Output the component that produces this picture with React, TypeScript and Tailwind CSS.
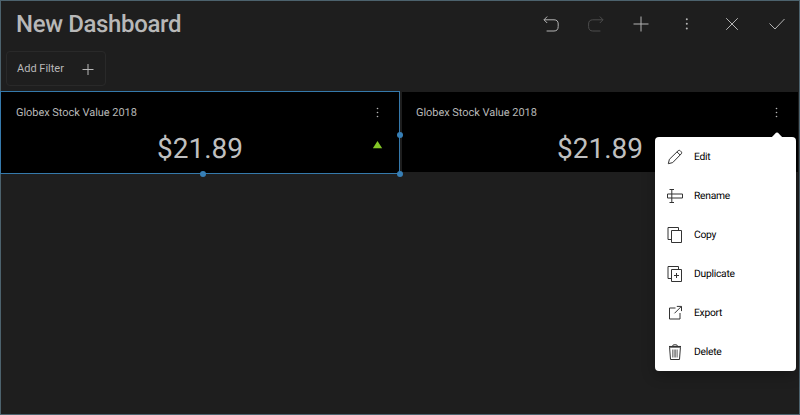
import type { ReactNode } from "react";

function Icon({ size = 20, className = "", children }: { size?: number; className?: string; children: ReactNode }) {
  return (
    <svg width={size} height={size} viewBox={`0 0 ${size} ${size}`} fill="none" stroke="currentColor" strokeWidth="1" className={`shrink-0 ${className}`}>
      {children}
    </svg>
  );
}

function Dots({ className = "" }: { className?: string }) {
  return (
    <Icon className={className}>
      <g fill="currentColor" stroke="none">
        <circle cx="10.5" cy="5.5" r="0.8" />
        <circle cx="10.5" cy="9.5" r="0.8" />
        <circle cx="10.5" cy="13.5" r="0.8" />
      </g>
    </Icon>
  );
}

function Header() {
  return (
    <header className="flex h-[45px] items-center justify-between pr-[12px] pl-[15px]">
      <h1 className="text-[24px] leading-[30px] font-medium tracking-[-0.36px] text-[#b8b8b8]">New Dashboard</h1>
      <div className="flex items-center gap-[25.2px] text-[#b4b4b4]">
        <Icon>
          <path d="M6.2 2.5L3 5.8L6.2 9M3 5.8H13Q17.2 5.8 17.2 10V12.4Q17.2 17 13 17H5.6" />
        </Icon>
        <Icon className="text-[#4c4c4c]">
          <path d="M13.8 2.5L17 5.8L13.8 9M17 5.8H6.8Q2.6 5.8 2.6 10V12.4Q2.6 17 6.8 17H14.4" />
        </Icon>
        <Icon>
          <path d="M2.5 10H17.5M10 2.5V17.5" />
        </Icon>
        <Icon>
          <g fill="currentColor" stroke="none">
            <circle cx="9.8" cy="5.2" r="1" />
            <circle cx="9.8" cy="9.8" r="1" />
            <circle cx="9.8" cy="14.4" r="1" />
          </g>
        </Icon>
        <Icon>
          <path d="M4.2 4.2L15.8 15.8M15.8 4.2L4.2 15.8" />
        </Icon>
        <Icon>
          <path d="M2.5 9.5L8 15L17.5 5" />
        </Icon>
      </div>
    </header>
  );
}

function MetricCard({ selected = false }: { selected?: boolean }) {
  return (
    <section className={selected ? "relative h-[83px] w-[400px] border border-[#3579ab] bg-black" : "mt-[1px] ml-[2px] h-[80px] w-[396px] bg-black"}>
      <div className={selected ? "flex h-[42px] items-center justify-between pr-[12px] pl-[15px]" : "flex h-[42px] items-center justify-between pr-[12px] pl-[14px]"}>
        <h2 className="text-[11px] leading-[16px] tracking-[-0.04px] text-[#b8b8b8]">Globex Stock Value 2018</h2>
        <Dots className="text-[#b4b4b4]" />
      </div>
      <div className="flex h-[30px] items-center">
        <span className={selected ? "w-[398px] text-center text-[28px] leading-[30px] text-[#bfbfbf]" : "w-[396px] text-center text-[28px] leading-[30px] text-[#bfbfbf]"}>$21.89</span>
      </div>
      {selected && (
        <>
          <svg width="10" height="8" viewBox="0 0 10 8" className="absolute top-[49px] left-[372px]">
            <path d="M4.5 0L9.2 7.3H-0.2Z" fill="#83c626" />
          </svg>
          <span className="absolute top-[40px] left-[396px] h-[6px] w-[6px] rounded-full bg-[#377fb6]" />
          <span className="absolute top-[78.5px] left-[199px] h-[6px] w-[6px] rounded-full bg-[#377fb6]" />
          <span className="absolute top-[78.5px] left-[396px] h-[6px] w-[6px] rounded-full bg-[#377fb6]" />
        </>
      )}
    </section>
  );
}

const actions: { label: string; icon: ReactNode }[] = [
  { label: "Edit", icon: <path d="M3.3 16.7L4.4 12.3L13.2 3.7Q14.4 2.8 15.4 3.9L16.1 4.6Q17.2 5.7 16.3 6.8L7.7 15.6ZM12 4.9L15.1 8" /> },
  { label: "Rename", icon: <path d="M4.5 3.5H9M6.8 3.5V16.5M4.5 16.5H9M2.5 8H17.5V12H2.5Z" /> },
  { label: "Copy", icon: <path d="M6.5 14.5H3V2.5H13.5V5.5M6.5 5.5H16.5V17.5H6.5Z" /> },
  { label: "Duplicate", icon: <path d="M6.5 14.5H3V2.5H13.5V5.5M6.5 5.5H16.5V17.5H6.5ZM9 11.5H14M11.5 9V14" /> },
  { label: "Export", icon: <path d="M10.5 5H4.5V16H15V10M9.5 10.3L16.2 3.6M11.8 3.4H16.5V8.1" /> },
  {
    label: "Delete",
    icon: (
      <>
        <path d="M4.6 5.5L5.5 17.5H14.5L15.4 5.5" />
        <path d="M7.7 7.5V15.5M9.2 7.5V15.5M10.7 7.5V15.5M12.2 7.5V15.5" strokeWidth="0.7" />
        <path d="M4 4.8H16" strokeWidth="1.7" />
        <path d="M7.5 4.5Q7.5 2.8 9 2.8H11Q12.5 2.8 12.5 4.5" />
      </>
    ),
  },
];

function ActionMenu() {
  return (
    <div className="absolute top-[136px] left-[654px] w-[141px] rounded-[4px] bg-white shadow-[0_4px_14px_rgba(0,0,0,0.3)]">
      <svg width="12" height="6" viewBox="0 0 12 6" className="absolute top-[-5px] left-[115.5px]">
        <path d="M0 6L5 0.8Q6 0 7 0.8L12 6Z" fill="white" />
      </svg>
      <ul>
        {actions.map((a) => (
          <li key={a.label} className="flex h-[39px] items-center gap-[9px] pl-[10px] text-[10.3px] tracking-[-0.25px] text-black">
            <Icon className="text-[#333333]">{a.icon}</Icon>
            <span>{a.label}</span>
          </li>
        ))}
      </ul>
    </div>
  );
}

export default function App() {
  return (
    <main className="relative h-[415px] w-[800px] border border-[#4c626d] bg-[#1e1e1e] font-['Roboto',sans-serif] antialiased [text-rendering:geometricPrecision]">
      <Header />
      <div className="flex h-[45px] items-start pt-[5px] pl-[5px]">
        <button className="flex h-[35px] w-[100px] items-center justify-between rounded-[4px] border border-[#292929] pr-[7px] pl-[10px] text-[11px] text-[#b8b8b8]">
          <span className="pt-[2px]">Add Filter</span>
          <Icon>
            <path d="M4.5 10.5H15.5M10 5V16" />
          </Icon>
        </button>
      </div>
      <div className="-ml-px flex">
        <MetricCard selected />
        <MetricCard />
      </div>
      <ActionMenu />
    </main>
  );
}
